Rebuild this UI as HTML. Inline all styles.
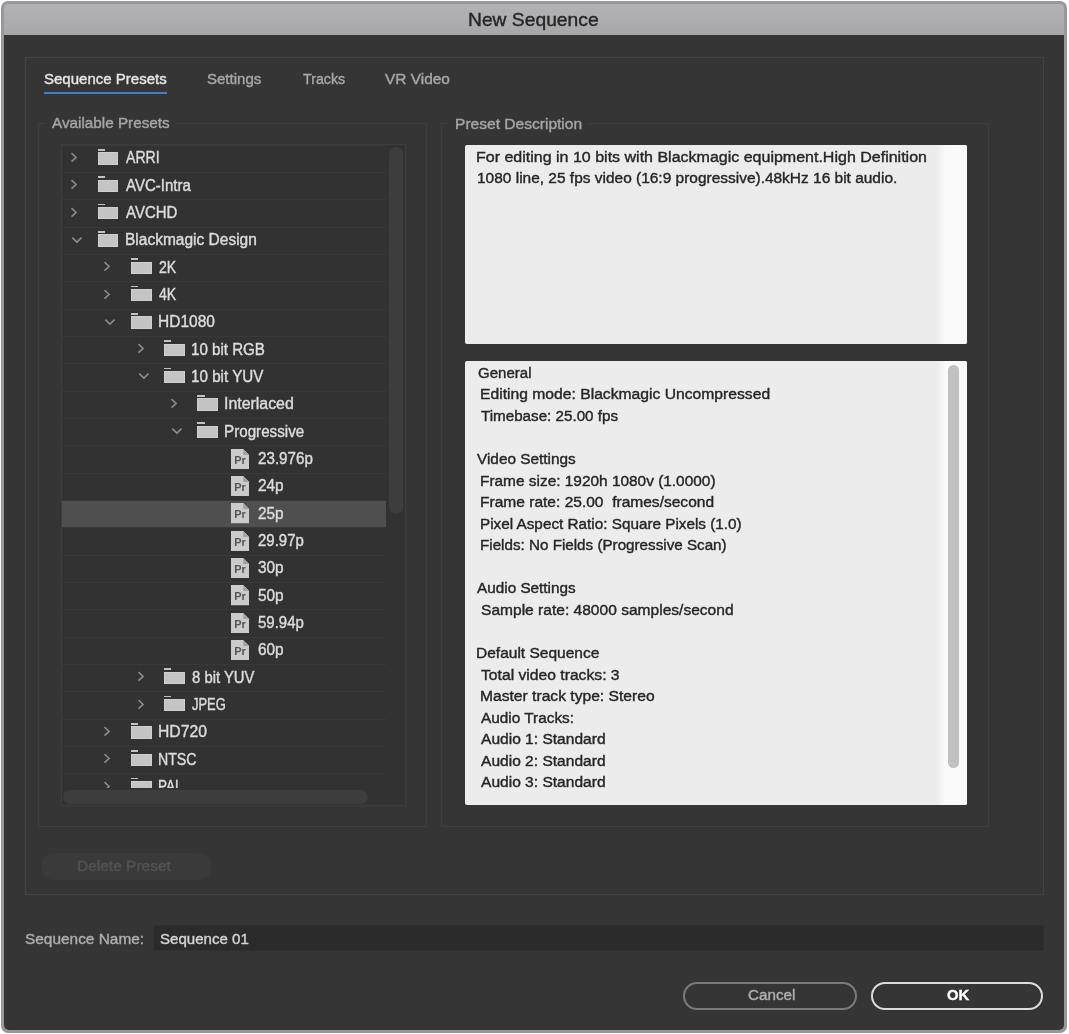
<!DOCTYPE html><html><head><meta charset="utf-8"><title>New Sequence</title><style>
*{box-sizing:border-box;margin:0;padding:0}
html,body{width:1069px;height:1034px;overflow:hidden;background:#fff}
body{font-family:"Liberation Sans",sans-serif;position:relative}
.abs{position:absolute}
.tx{position:absolute;white-space:pre;line-height:1;transform-origin:0 0;-webkit-text-stroke:0.4px currentColor;filter:blur(0.45px)}
svg,.fold{filter:blur(0.4px)}
#win{left:1.3px;top:1px;width:1065.7px;height:1031.7px;border-radius:7px;background:#98989a;overflow:hidden}
#tbar{left:2.7px;top:2.7px;right:2.7px;height:31.3px;border-radius:4.5px 4.5px 0 0;background:linear-gradient(#b3b3b5,#a7a7a9)}
#body{left:2.8px;top:34px;right:2.8px;bottom:2.6px;background:#353535;border-radius:0 0 5px 5px}
</style></head><body>
<div class="abs" id="win"><div class="abs" id="tbar"></div><div class="abs" id="body"></div></div>
<div class="abs" style="left:25px;top:56.5px;width:1019px;height:838px;border:1px solid #424242"></div>
<div class="abs" style="left:44px;top:92px;width:123px;height:2px;background:#3c7fcb"></div>
<div class="abs" style="left:38.2px;top:123.3px;width:389.3px;height:703.4px;border:1px solid #3f3f3f"></div>
<div class="abs" style="left:45px;top:115px;width:131px;height:18px;background:#353535"></div>
<div class="abs" style="left:441.2px;top:123.3px;width:548.2px;height:703.4px;border:1px solid #3f3f3f"></div>
<div class="abs" style="left:449px;top:115px;width:139px;height:18px;background:#353535"></div>
<div class="abs" id="tree" style="left:61.2px;top:143.6px;width:345px;height:662.4px;background:#323232;border:1px solid #3d3d3d;overflow:hidden">
<div class="abs" style="left:0;top:-0.10px;width:324px;height:27.335px;border-top:1px solid #393939"></div>
<div class="abs" style="left:0;top:27.23px;width:324px;height:27.335px;border-top:1px solid #393939"></div>
<div class="abs" style="left:0;top:54.57px;width:324px;height:27.335px;border-top:1px solid #393939"></div>
<div class="abs" style="left:0;top:81.91px;width:324px;height:27.335px;border-top:1px solid #393939"></div>
<div class="abs" style="left:0;top:109.24px;width:324px;height:27.335px;border-top:1px solid #393939"></div>
<div class="abs" style="left:0;top:136.58px;width:324px;height:27.335px;border-top:1px solid #393939"></div>
<div class="abs" style="left:0;top:163.91px;width:324px;height:27.335px;border-top:1px solid #393939"></div>
<div class="abs" style="left:0;top:191.25px;width:324px;height:27.335px;border-top:1px solid #393939"></div>
<div class="abs" style="left:0;top:218.58px;width:324px;height:27.335px;border-top:1px solid #393939"></div>
<div class="abs" style="left:0;top:245.92px;width:324px;height:27.335px;border-top:1px solid #393939"></div>
<div class="abs" style="left:0;top:273.25px;width:324px;height:27.335px;border-top:1px solid #393939"></div>
<div class="abs" style="left:0;top:300.58px;width:324px;height:27.335px;border-top:1px solid #393939"></div>
<div class="abs" style="left:0;top:327.92px;width:324px;height:27.335px;border-top:1px solid #393939"></div>
<div class="abs" style="left:0;top:355.25px;width:324px;height:27.335px;background:linear-gradient(#4f4f4f,#4f4f4f) 0 0/100% 26.2px no-repeat;border-top:1px solid #393939"></div>
<div class="abs" style="left:0;top:382.59px;width:324px;height:27.335px;border-top:1px solid #393939"></div>
<div class="abs" style="left:0;top:409.93px;width:324px;height:27.335px;border-top:1px solid #393939"></div>
<div class="abs" style="left:0;top:437.26px;width:324px;height:27.335px;border-top:1px solid #393939"></div>
<div class="abs" style="left:0;top:464.59px;width:324px;height:27.335px;border-top:1px solid #393939"></div>
<div class="abs" style="left:0;top:491.93px;width:324px;height:27.335px;border-top:1px solid #393939"></div>
<div class="abs" style="left:0;top:519.26px;width:324px;height:27.335px;border-top:1px solid #393939"></div>
<div class="abs" style="left:0;top:546.60px;width:324px;height:27.335px;border-top:1px solid #393939"></div>
<div class="abs" style="left:0;top:573.93px;width:324px;height:27.335px;border-top:1px solid #393939"></div>
<div class="abs" style="left:0;top:601.27px;width:324px;height:27.335px;border-top:1px solid #393939"></div>
<div class="abs" style="left:0;top:628.61px;width:324px;height:27.335px;border-top:1px solid #393939"></div>
</div>
<svg class="abs" style="left:70.2px;top:151.0px" width="9" height="13" viewBox="0 0 9 13"><path d="M1.5 2.1 L6.1 6.4 L1.5 10.7" fill="none" stroke="#8a8a8a" stroke-width="1.6"/></svg>
<div class="abs fold" style="left:97.65px;top:149.1px;width:20.7px;height:17px"><div class="abs" style="left:0.2px;top:0;width:7.2px;height:1.6px;background:#c2c2c2"></div><div class="abs" style="left:0;top:3.3px;width:20.7px;height:12.2px;background:#c4c4c4;box-shadow:inset 0 0 0 1px #cecece"></div></div>
<svg class="abs" style="left:70.2px;top:178.335px" width="9" height="13" viewBox="0 0 9 13"><path d="M1.5 2.1 L6.1 6.4 L1.5 10.7" fill="none" stroke="#8a8a8a" stroke-width="1.6"/></svg>
<div class="abs fold" style="left:97.65px;top:176.435px;width:20.7px;height:17px"><div class="abs" style="left:0.2px;top:0;width:7.2px;height:1.6px;background:#c2c2c2"></div><div class="abs" style="left:0;top:3.3px;width:20.7px;height:12.2px;background:#c4c4c4;box-shadow:inset 0 0 0 1px #cecece"></div></div>
<svg class="abs" style="left:70.2px;top:205.67000000000002px" width="9" height="13" viewBox="0 0 9 13"><path d="M1.5 2.1 L6.1 6.4 L1.5 10.7" fill="none" stroke="#8a8a8a" stroke-width="1.6"/></svg>
<div class="abs fold" style="left:97.65px;top:203.77px;width:20.7px;height:17px"><div class="abs" style="left:0.2px;top:0;width:7.2px;height:1.6px;background:#c2c2c2"></div><div class="abs" style="left:0;top:3.3px;width:20.7px;height:12.2px;background:#c4c4c4;box-shadow:inset 0 0 0 1px #cecece"></div></div>
<svg class="abs" style="left:71.2px;top:235.505px" width="13" height="9" viewBox="0 0 13 9"><path d="M1.3 1.6 L5.9 6.1 L10.5 1.6" fill="none" stroke="#8e8e8e" stroke-width="1.5"/></svg>
<div class="abs fold" style="left:97.65px;top:231.105px;width:20.7px;height:17px"><div class="abs" style="left:0.2px;top:0;width:7.2px;height:1.6px;background:#c2c2c2"></div><div class="abs" style="left:0;top:3.3px;width:20.7px;height:12.2px;background:#c4c4c4;box-shadow:inset 0 0 0 1px #cecece"></div></div>
<svg class="abs" style="left:103.4px;top:260.34000000000003px" width="9" height="13" viewBox="0 0 9 13"><path d="M1.5 2.1 L6.1 6.4 L1.5 10.7" fill="none" stroke="#8a8a8a" stroke-width="1.6"/></svg>
<div class="abs fold" style="left:130.85000000000002px;top:258.44px;width:20.7px;height:17px"><div class="abs" style="left:0.2px;top:0;width:7.2px;height:1.6px;background:#c2c2c2"></div><div class="abs" style="left:0;top:3.3px;width:20.7px;height:12.2px;background:#c4c4c4;box-shadow:inset 0 0 0 1px #cecece"></div></div>
<svg class="abs" style="left:103.4px;top:287.675px" width="9" height="13" viewBox="0 0 9 13"><path d="M1.5 2.1 L6.1 6.4 L1.5 10.7" fill="none" stroke="#8a8a8a" stroke-width="1.6"/></svg>
<div class="abs fold" style="left:130.85000000000002px;top:285.77500000000003px;width:20.7px;height:17px"><div class="abs" style="left:0.2px;top:0;width:7.2px;height:1.6px;background:#c2c2c2"></div><div class="abs" style="left:0;top:3.3px;width:20.7px;height:12.2px;background:#c4c4c4;box-shadow:inset 0 0 0 1px #cecece"></div></div>
<svg class="abs" style="left:104.4px;top:317.51px" width="13" height="9" viewBox="0 0 13 9"><path d="M1.3 1.6 L5.9 6.1 L10.5 1.6" fill="none" stroke="#8e8e8e" stroke-width="1.5"/></svg>
<div class="abs fold" style="left:130.85000000000002px;top:313.11px;width:20.7px;height:17px"><div class="abs" style="left:0.2px;top:0;width:7.2px;height:1.6px;background:#c2c2c2"></div><div class="abs" style="left:0;top:3.3px;width:20.7px;height:12.2px;background:#c4c4c4;box-shadow:inset 0 0 0 1px #cecece"></div></div>
<svg class="abs" style="left:136.60000000000002px;top:342.345px" width="9" height="13" viewBox="0 0 9 13"><path d="M1.5 2.1 L6.1 6.4 L1.5 10.7" fill="none" stroke="#8a8a8a" stroke-width="1.6"/></svg>
<div class="abs fold" style="left:164.05px;top:340.44500000000005px;width:20.7px;height:17px"><div class="abs" style="left:0.2px;top:0;width:7.2px;height:1.6px;background:#c2c2c2"></div><div class="abs" style="left:0;top:3.3px;width:20.7px;height:12.2px;background:#c4c4c4;box-shadow:inset 0 0 0 1px #cecece"></div></div>
<svg class="abs" style="left:137.60000000000002px;top:372.18px" width="13" height="9" viewBox="0 0 13 9"><path d="M1.3 1.6 L5.9 6.1 L10.5 1.6" fill="none" stroke="#8e8e8e" stroke-width="1.5"/></svg>
<div class="abs fold" style="left:164.05px;top:367.78000000000003px;width:20.7px;height:17px"><div class="abs" style="left:0.2px;top:0;width:7.2px;height:1.6px;background:#c2c2c2"></div><div class="abs" style="left:0;top:3.3px;width:20.7px;height:12.2px;background:#c4c4c4;box-shadow:inset 0 0 0 1px #cecece"></div></div>
<svg class="abs" style="left:169.8px;top:397.015px" width="9" height="13" viewBox="0 0 9 13"><path d="M1.5 2.1 L6.1 6.4 L1.5 10.7" fill="none" stroke="#8a8a8a" stroke-width="1.6"/></svg>
<div class="abs fold" style="left:197.25px;top:395.115px;width:20.7px;height:17px"><div class="abs" style="left:0.2px;top:0;width:7.2px;height:1.6px;background:#c2c2c2"></div><div class="abs" style="left:0;top:3.3px;width:20.7px;height:12.2px;background:#c4c4c4;box-shadow:inset 0 0 0 1px #cecece"></div></div>
<svg class="abs" style="left:170.8px;top:426.85px" width="13" height="9" viewBox="0 0 13 9"><path d="M1.3 1.6 L5.9 6.1 L10.5 1.6" fill="none" stroke="#8e8e8e" stroke-width="1.5"/></svg>
<div class="abs fold" style="left:197.25px;top:422.45000000000005px;width:20.7px;height:17px"><div class="abs" style="left:0.2px;top:0;width:7.2px;height:1.6px;background:#c2c2c2"></div><div class="abs" style="left:0;top:3.3px;width:20.7px;height:12.2px;background:#c4c4c4;box-shadow:inset 0 0 0 1px #cecece"></div></div>
<svg class="abs" style="left:230.6px;top:448.685px" width="18.2" height="20.2" viewBox="0 0 18.2 20.2"><path d="M0 0 H12.2 L18.2 6 V20.2 H0 Z" fill="#cbcbcb"/><path d="M12.2 0 V6 H18.2 Z" fill="#a2a2a2"/><text x="3.3" y="15" font-family="Liberation Sans" font-weight="700" font-size="10.5" fill="#555" textLength="11.6" lengthAdjust="spacingAndGlyphs">Pr</text></svg>
<svg class="abs" style="left:230.6px;top:476.02px" width="18.2" height="20.2" viewBox="0 0 18.2 20.2"><path d="M0 0 H12.2 L18.2 6 V20.2 H0 Z" fill="#cbcbcb"/><path d="M12.2 0 V6 H18.2 Z" fill="#a2a2a2"/><text x="3.3" y="15" font-family="Liberation Sans" font-weight="700" font-size="10.5" fill="#555" textLength="11.6" lengthAdjust="spacingAndGlyphs">Pr</text></svg>
<svg class="abs" style="left:230.6px;top:503.355px" width="18.2" height="20.2" viewBox="0 0 18.2 20.2"><path d="M0 0 H12.2 L18.2 6 V20.2 H0 Z" fill="#cbcbcb"/><path d="M12.2 0 V6 H18.2 Z" fill="#a2a2a2"/><text x="3.3" y="15" font-family="Liberation Sans" font-weight="700" font-size="10.5" fill="#555" textLength="11.6" lengthAdjust="spacingAndGlyphs">Pr</text></svg>
<svg class="abs" style="left:230.6px;top:530.69px" width="18.2" height="20.2" viewBox="0 0 18.2 20.2"><path d="M0 0 H12.2 L18.2 6 V20.2 H0 Z" fill="#cbcbcb"/><path d="M12.2 0 V6 H18.2 Z" fill="#a2a2a2"/><text x="3.3" y="15" font-family="Liberation Sans" font-weight="700" font-size="10.5" fill="#555" textLength="11.6" lengthAdjust="spacingAndGlyphs">Pr</text></svg>
<svg class="abs" style="left:230.6px;top:558.0250000000001px" width="18.2" height="20.2" viewBox="0 0 18.2 20.2"><path d="M0 0 H12.2 L18.2 6 V20.2 H0 Z" fill="#cbcbcb"/><path d="M12.2 0 V6 H18.2 Z" fill="#a2a2a2"/><text x="3.3" y="15" font-family="Liberation Sans" font-weight="700" font-size="10.5" fill="#555" textLength="11.6" lengthAdjust="spacingAndGlyphs">Pr</text></svg>
<svg class="abs" style="left:230.6px;top:585.36px" width="18.2" height="20.2" viewBox="0 0 18.2 20.2"><path d="M0 0 H12.2 L18.2 6 V20.2 H0 Z" fill="#cbcbcb"/><path d="M12.2 0 V6 H18.2 Z" fill="#a2a2a2"/><text x="3.3" y="15" font-family="Liberation Sans" font-weight="700" font-size="10.5" fill="#555" textLength="11.6" lengthAdjust="spacingAndGlyphs">Pr</text></svg>
<svg class="abs" style="left:230.6px;top:612.6949999999999px" width="18.2" height="20.2" viewBox="0 0 18.2 20.2"><path d="M0 0 H12.2 L18.2 6 V20.2 H0 Z" fill="#cbcbcb"/><path d="M12.2 0 V6 H18.2 Z" fill="#a2a2a2"/><text x="3.3" y="15" font-family="Liberation Sans" font-weight="700" font-size="10.5" fill="#555" textLength="11.6" lengthAdjust="spacingAndGlyphs">Pr</text></svg>
<svg class="abs" style="left:230.6px;top:640.03px" width="18.2" height="20.2" viewBox="0 0 18.2 20.2"><path d="M0 0 H12.2 L18.2 6 V20.2 H0 Z" fill="#cbcbcb"/><path d="M12.2 0 V6 H18.2 Z" fill="#a2a2a2"/><text x="3.3" y="15" font-family="Liberation Sans" font-weight="700" font-size="10.5" fill="#555" textLength="11.6" lengthAdjust="spacingAndGlyphs">Pr</text></svg>
<svg class="abs" style="left:136.60000000000002px;top:670.365px" width="9" height="13" viewBox="0 0 9 13"><path d="M1.5 2.1 L6.1 6.4 L1.5 10.7" fill="none" stroke="#8a8a8a" stroke-width="1.6"/></svg>
<div class="abs fold" style="left:164.05px;top:668.465px;width:20.7px;height:17px"><div class="abs" style="left:0.2px;top:0;width:7.2px;height:1.6px;background:#c2c2c2"></div><div class="abs" style="left:0;top:3.3px;width:20.7px;height:12.2px;background:#c4c4c4;box-shadow:inset 0 0 0 1px #cecece"></div></div>
<svg class="abs" style="left:136.60000000000002px;top:697.7px" width="9" height="13" viewBox="0 0 9 13"><path d="M1.5 2.1 L6.1 6.4 L1.5 10.7" fill="none" stroke="#8a8a8a" stroke-width="1.6"/></svg>
<div class="abs fold" style="left:164.05px;top:695.8000000000001px;width:20.7px;height:17px"><div class="abs" style="left:0.2px;top:0;width:7.2px;height:1.6px;background:#c2c2c2"></div><div class="abs" style="left:0;top:3.3px;width:20.7px;height:12.2px;background:#c4c4c4;box-shadow:inset 0 0 0 1px #cecece"></div></div>
<svg class="abs" style="left:103.4px;top:725.035px" width="9" height="13" viewBox="0 0 9 13"><path d="M1.5 2.1 L6.1 6.4 L1.5 10.7" fill="none" stroke="#8a8a8a" stroke-width="1.6"/></svg>
<div class="abs fold" style="left:130.85000000000002px;top:723.135px;width:20.7px;height:17px"><div class="abs" style="left:0.2px;top:0;width:7.2px;height:1.6px;background:#c2c2c2"></div><div class="abs" style="left:0;top:3.3px;width:20.7px;height:12.2px;background:#c4c4c4;box-shadow:inset 0 0 0 1px #cecece"></div></div>
<svg class="abs" style="left:103.4px;top:752.37px" width="9" height="13" viewBox="0 0 9 13"><path d="M1.5 2.1 L6.1 6.4 L1.5 10.7" fill="none" stroke="#8a8a8a" stroke-width="1.6"/></svg>
<div class="abs fold" style="left:130.85000000000002px;top:750.47px;width:20.7px;height:17px"><div class="abs" style="left:0.2px;top:0;width:7.2px;height:1.6px;background:#c2c2c2"></div><div class="abs" style="left:0;top:3.3px;width:20.7px;height:12.2px;background:#c4c4c4;box-shadow:inset 0 0 0 1px #cecece"></div></div>
<svg class="abs" style="left:103.4px;top:779.705px" width="9" height="13" viewBox="0 0 9 13"><path d="M1.5 2.1 L6.1 6.4 L1.5 10.7" fill="none" stroke="#8a8a8a" stroke-width="1.6"/></svg>
<div class="abs fold" style="left:130.85000000000002px;top:777.8050000000001px;width:20.7px;height:17px"><div class="abs" style="left:0.2px;top:0;width:7.2px;height:1.6px;background:#c2c2c2"></div><div class="abs" style="left:0;top:3.3px;width:20.7px;height:12.2px;background:#c4c4c4;box-shadow:inset 0 0 0 1px #cecece"></div></div>
<div class="abs" style="z-index:3;left:62.2px;top:788px;width:343px;height:17px;background:#323232"></div>
<div class="abs" style="z-index:4;left:63px;top:790.4px;width:304.8px;height:14px;border-radius:7px;background:#3d3d3d"></div>
<div class="abs" style="left:386.2px;top:144.6px;width:19px;height:645px;background:#323232"></div>
<div class="abs" style="left:388.6px;top:147px;width:14px;height:367px;border-radius:7px;background:#3d3d3d"></div>
<div class="abs" style="left:464.5px;top:145px;width:502px;height:198.5px;background:#ececec;border-radius:2px"></div>
<div class="abs" style="left:937px;top:145px;width:29.5px;height:198.5px;background:linear-gradient(90deg,#ececec,#fafafa 28%);border-radius:0 2px 2px 0"></div>
<div class="abs" style="left:464.5px;top:361px;width:502px;height:443.8px;background:#ececec;border-radius:2px"></div>
<div class="abs" style="left:937px;top:361px;width:29.5px;height:443.8px;background:linear-gradient(90deg,#ececec,#fafafa 28%);border-radius:0 2px 2px 0"></div>
<div class="abs" style="left:948px;top:364.8px;width:11px;height:403.6px;border-radius:5.5px;background:#c1c1c1"></div>
<div class="abs" style="left:40.5px;top:853px;width:171px;height:27px;border-radius:14px;background:#3a3a3a"></div>
<div class="abs" style="left:152.5px;top:925px;width:891px;height:25.5px;background:#2b2b2b;border:1px solid #303030"></div>
<div class="abs" style="left:683.3px;top:982.3px;width:173.4px;height:28px;border-radius:14px;border:2px solid #7c7c7c"></div>
<div class="abs" style="left:870.7px;top:982.3px;width:172.6px;height:28px;border-radius:14px;border:2px solid #dcdcdc"></div>
<span class="tx" id="t0" style="left:467.99px;top:10.12px;font-size:19px;color:#262626;font-weight:400;transform:scaleX(1.0134);">New Sequence</span>
<span class="tx" id="t1" style="left:44.00px;top:70.88px;font-size:15.5px;color:#e6e6e6;font-weight:400;transform:scaleX(0.9692);">Sequence Presets</span>
<span class="tx" id="t2" style="left:207.00px;top:70.88px;font-size:15.5px;color:#a8a8a8;font-weight:400;transform:scaleX(0.9688);">Settings</span>
<span class="tx" id="t3" style="left:302.60px;top:70.88px;font-size:15.5px;color:#a8a8a8;font-weight:400;transform:scaleX(0.9182);">Tracks</span>
<span class="tx" id="t4" style="left:385.00px;top:70.88px;font-size:15.5px;color:#a8a8a8;font-weight:400;transform:scaleX(0.9956);">VR Video</span>
<span class="tx" id="t5" style="left:51.80px;top:115.48px;font-size:15.5px;color:#a6a6a6;font-weight:400;transform:scaleX(0.9848);">Available Presets</span>
<span class="tx" id="t6" style="left:454.50px;top:116.18px;font-size:15.5px;color:#a6a6a6;font-weight:400;transform:scaleX(1.0039);">Preset Description</span>
<span class="tx" id="t7" style="left:125.80px;top:150.39px;font-size:15.6px;color:#dcdcdc;font-weight:400;transform:scaleX(0.9019);">ARRI</span>
<span class="tx" id="t8" style="left:125.80px;top:177.73px;font-size:15.6px;color:#dcdcdc;font-weight:400;transform:scaleX(0.9626);">AVC-Intra</span>
<span class="tx" id="t9" style="left:125.80px;top:205.06px;font-size:15.6px;color:#dcdcdc;font-weight:400;transform:scaleX(0.9611);">AVCHD</span>
<span class="tx" id="t10" style="left:124.81px;top:232.40px;font-size:15.6px;color:#dcdcdc;font-weight:400;transform:scaleX(0.9944);">Blackmagic Design</span>
<span class="tx" id="t11" style="left:159.00px;top:259.73px;font-size:15.6px;color:#dcdcdc;font-weight:400;transform:scaleX(0.9048);">2K</span>
<span class="tx" id="t12" style="left:159.00px;top:287.07px;font-size:15.6px;color:#dcdcdc;font-weight:400;transform:scaleX(0.9048);">4K</span>
<span class="tx" id="t13" style="left:158.01px;top:314.40px;font-size:15.6px;color:#dcdcdc;font-weight:400;transform:scaleX(0.9940);">HD1080</span>
<span class="tx" id="t14" style="left:191.23px;top:341.74px;font-size:15.6px;color:#dcdcdc;font-weight:400;transform:scaleX(0.9697);">10 bit RGB</span>
<span class="tx" id="t15" style="left:191.22px;top:369.07px;font-size:15.6px;color:#dcdcdc;font-weight:400;transform:scaleX(0.9752);">10 bit YUV</span>
<span class="tx" id="t16" style="left:224.38px;top:396.41px;font-size:15.6px;color:#dcdcdc;font-weight:400;transform:scaleX(1.0193);">Interlaced</span>
<span class="tx" id="t17" style="left:224.43px;top:423.74px;font-size:15.6px;color:#dcdcdc;font-weight:400;transform:scaleX(0.9745);">Progressive</span>
<span class="tx" id="t18" style="left:258.00px;top:451.08px;font-size:15.6px;color:#dcdcdc;font-weight:400;transform:scaleX(0.9736);">23.976p</span>
<span class="tx" id="t19" style="left:258.00px;top:478.41px;font-size:15.6px;color:#dcdcdc;font-weight:400;transform:scaleX(0.9869);">24p</span>
<span class="tx" id="t20" style="left:258.00px;top:505.75px;font-size:15.6px;color:#dcdcdc;font-weight:400;transform:scaleX(0.9869);">25p</span>
<span class="tx" id="t21" style="left:258.00px;top:533.08px;font-size:15.6px;color:#dcdcdc;font-weight:400;transform:scaleX(0.9621);">29.97p</span>
<span class="tx" id="t22" style="left:258.00px;top:560.42px;font-size:15.6px;color:#dcdcdc;font-weight:400;transform:scaleX(0.9869);">30p</span>
<span class="tx" id="t23" style="left:258.00px;top:587.75px;font-size:15.6px;color:#dcdcdc;font-weight:400;transform:scaleX(0.9869);">50p</span>
<span class="tx" id="t24" style="left:258.00px;top:615.09px;font-size:15.6px;color:#dcdcdc;font-weight:400;transform:scaleX(0.9621);">59.94p</span>
<span class="tx" id="t25" style="left:258.00px;top:642.42px;font-size:15.6px;color:#dcdcdc;font-weight:400;transform:scaleX(0.9869);">60p</span>
<span class="tx" id="t26" style="left:192.20px;top:669.76px;font-size:15.6px;color:#dcdcdc;font-weight:400;transform:scaleX(0.9523);">8 bit YUV</span>
<span class="tx" id="t27" style="left:192.20px;top:697.09px;font-size:15.6px;color:#dcdcdc;font-weight:400;transform:scaleX(0.8308);">JPEG</span>
<span class="tx" id="t28" style="left:157.99px;top:724.43px;font-size:15.6px;color:#dcdcdc;font-weight:400;transform:scaleX(1.0069);">HD720</span>
<span class="tx" id="t29" style="left:158.09px;top:751.76px;font-size:15.6px;color:#dcdcdc;font-weight:400;transform:scaleX(0.9080);">NTSC</span>
<span class="tx" id="t30" style="left:158.13px;top:779.10px;font-size:15.6px;color:#dcdcdc;font-weight:400;transform:scaleX(0.8682);">PAL</span>
<span class="tx" id="t31" style="left:476.26px;top:148.96px;font-size:15.4px;color:#262626;font-weight:400;transform:scaleX(1.0397);">For editing in 10 bits with Blackmagic equipment.High Definition</span>
<span class="tx" id="t32" style="left:477.00px;top:170.36px;font-size:15.4px;color:#262626;font-weight:400;transform:scaleX(1.0046);">1080 line, 25 fps video (16:9 progressive).48kHz 16 bit audio.</span>
<span class="tx" id="t33" style="left:477.50px;top:364.86px;font-size:15.4px;color:#262626;font-weight:400;transform:scaleX(0.9773);">General</span>
<span class="tx" id="t34" style="left:479.68px;top:386.41px;font-size:15.4px;color:#262626;font-weight:400;transform:scaleX(1.0184);">Editing mode: Blackmagic Uncompressed</span>
<span class="tx" id="t35" style="left:480.70px;top:407.96px;font-size:15.4px;color:#262626;font-weight:400;transform:scaleX(0.9865);">Timebase: 25.00 fps</span>
<span class="tx" id="t36" style="left:477.00px;top:451.06px;font-size:15.4px;color:#262626;font-weight:400;transform:scaleX(0.9972);">Video Settings</span>
<span class="tx" id="t37" style="left:480.00px;top:472.61px;font-size:15.4px;color:#262626;font-weight:400;transform:scaleX(1.0011);">Frame size: 1920h 1080v (1.0000)</span>
<span class="tx" id="t38" style="left:479.99px;top:494.16px;font-size:15.4px;color:#262626;font-weight:400;transform:scaleX(1.0097);">Frame rate: 25.00  frames/second</span>
<span class="tx" id="t39" style="left:480.01px;top:515.71px;font-size:15.4px;color:#262626;font-weight:400;transform:scaleX(0.9932);">Pixel Aspect Ratio: Square Pixels (1.0)</span>
<span class="tx" id="t40" style="left:480.01px;top:537.26px;font-size:15.4px;color:#262626;font-weight:400;transform:scaleX(0.9874);">Fields: No Fields (Progressive Scan)</span>
<span class="tx" id="t41" style="left:477.00px;top:580.36px;font-size:15.4px;color:#262626;font-weight:400;transform:scaleX(0.9944);">Audio Settings</span>
<span class="tx" id="t42" style="left:481.00px;top:601.91px;font-size:15.4px;color:#262626;font-weight:400;transform:scaleX(1.0110);">Sample rate: 48000 samples/second</span>
<span class="tx" id="t43" style="left:476.49px;top:645.01px;font-size:15.4px;color:#262626;font-weight:400;transform:scaleX(1.0083);">Default Sequence</span>
<span class="tx" id="t44" style="left:481.00px;top:666.56px;font-size:15.4px;color:#262626;font-weight:400;transform:scaleX(1.0188);">Total video tracks: 3</span>
<span class="tx" id="t45" style="left:479.98px;top:688.11px;font-size:15.4px;color:#262626;font-weight:400;transform:scaleX(1.0155);">Master track type: Stereo</span>
<span class="tx" id="t46" style="left:481.00px;top:709.66px;font-size:15.4px;color:#262626;font-weight:400;transform:scaleX(0.9974);">Audio Tracks:</span>
<span class="tx" id="t47" style="left:481.00px;top:731.21px;font-size:15.4px;color:#262626;font-weight:400;transform:scaleX(1.0110);">Audio 1: Standard</span>
<span class="tx" id="t48" style="left:481.00px;top:752.76px;font-size:15.4px;color:#262626;font-weight:400;transform:scaleX(1.0110);">Audio 2: Standard</span>
<span class="tx" id="t49" style="left:481.00px;top:774.31px;font-size:15.4px;color:#262626;font-weight:400;transform:scaleX(1.0110);">Audio 3: Standard</span>
<span class="tx" id="t50" style="left:76.90px;top:858.28px;font-size:15.5px;color:#525252;font-weight:400;transform:scaleX(0.9989);">Delete Preset</span>
<span class="tx" id="t51" style="left:25.00px;top:930.88px;font-size:15.5px;color:#adadad;font-weight:400;transform:scaleX(0.9944);">Sequence Name:</span>
<span class="tx" id="t52" style="left:159.80px;top:930.88px;font-size:15.5px;color:#d4d4d4;font-weight:400;transform:scaleX(0.9731);">Sequence 01</span>
<span class="tx" id="t53" style="left:747.50px;top:987.48px;font-size:15.5px;color:#b0b0b0;font-weight:400;transform:scaleX(0.9832);">Cancel</span>
<span class="tx" id="t54" style="left:947.00px;top:987.48px;font-size:15.5px;color:#ffffff;font-weight:700;transform:scaleX(0.9519);">OK</span>
</body></html>
